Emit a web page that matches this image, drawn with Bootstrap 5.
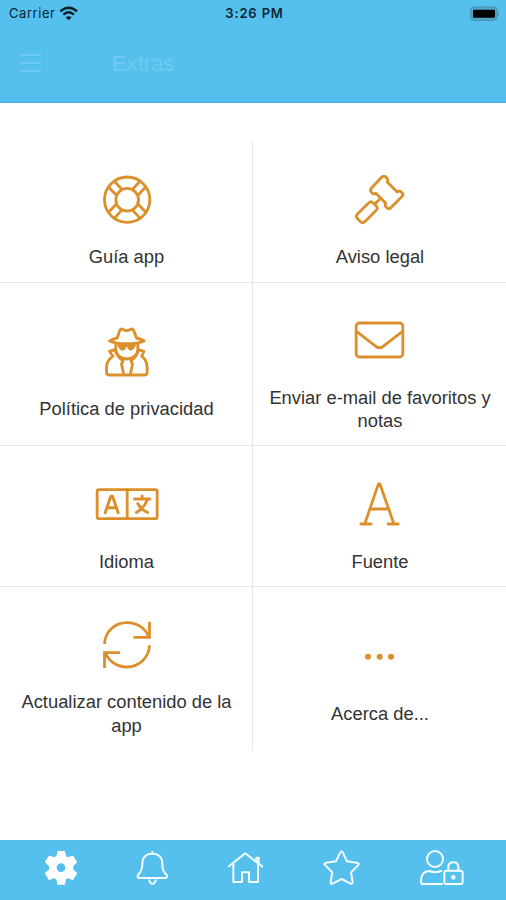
<!DOCTYPE html>
<html lang="es">
<head>
<meta charset="utf-8">
<meta name="viewport" content="width=device-width, initial-scale=1">
<title>Extras</title>
<link href="https://cdn.jsdelivr.net/npm/bootstrap@5.3.0/dist/css/bootstrap.min.css" rel="stylesheet">
<style>
body{font-family:"Liberation Sans",Arial,sans-serif;height:900px;overflow:hidden;color:#333}
.sky{background:#55c0ee}
.top-area{height:103px;border-bottom:2px solid #43b8e9}
.status{height:27px;font-family:Inter,sans-serif;color:#0b2634;line-height:27px;padding:0 6px 0 9px}
.carrier{font-size:13px;letter-spacing:.55px}
.clock{font-size:13px;font-weight:600;letter-spacing:.85px}
.battery{margin-right:-1px}
.title-bar{height:72px;padding-left:20px;color:#70c9f1}
.screen-title{font-size:22px;margin-left:71px}
.tiles{margin-top:39px}
.tile{padding:33px 11px 13px 12px;font-size:18.35px;line-height:23.5px;border-bottom:1px solid #e6e6e6}
.tile:nth-child(odd){border-right:1px solid #e6e6e6}
.tile:nth-child(3),.tile:nth-child(4){padding-bottom:12px}
.tile:nth-last-child(-n+2){border-bottom:0}
.tile svg{width:70px;height:50px;margin-bottom:20px;flex:none;fill:none;stroke:#dc902d;stroke-width:8.5;stroke-linecap:round;stroke-linejoin:round}
.tile:nth-child(5) svg,.tile:nth-child(6) svg{margin-bottom:21px}
.tabs{height:60px;padding:0 42px 0 44.7px}
.tabs a{line-height:0}
.tabs svg{height:60px;overflow:visible;fill:none;stroke:#f5fcff;stroke-width:6;stroke-linecap:round;stroke-linejoin:round}
</style>
</head>
<body class="d-flex flex-column bg-white">
<header class="sky top-area">
  <div class="status row g-0">
    <div class="col d-flex align-items-center"><span class="carrier">Carrier</span>
      <svg class="ms-1" width="20" height="15" viewBox="183 14 60 45" fill="none" stroke="#071c27" stroke-width="7"><path d="M187 30Q212 8 237 30M196 40Q212 26 228 40"/><path d="M203 48Q212 41 221 48L212 57Z" fill="#071c27" stroke="none"/></svg>
    </div>
    <div class="col-auto clock">3:26 PM</div>
    <div class="col d-flex align-items-center justify-content-end">
      <svg class="battery" width="32" height="16" viewBox="648 16 96 48"><rect x="653" y="19" width="79" height="40" rx="10" fill="#54a6c8" stroke="#438fae" stroke-width="3"/><path d="M735 31q6 8 0 16z" fill="#438fae"/><rect x="660" y="27" width="66" height="24" rx="3" fill="#000"/></svg>
    </div>
  </div>
  <div class="title-bar d-flex align-items-center">
    <svg width="21" height="20" viewBox="0 0 21 20" stroke="currentColor" stroke-width="1.8"><path d="M0 2H21M0 10H21M0 18H21"/></svg>
    <div class="screen-title">Extras</div>
  </div>
</header>
<main class="flex-grow-1">
  <div class="tiles row row-cols-2 g-0 text-center">
    <div class="tile col d-flex flex-column align-items-center justify-content-center">
      <svg viewBox="34.5 45 210 150"><circle cx="140" cy="119" r="68"/><circle cx="140" cy="119" r="34"/><path d="M101 63L123 87M84 81L107 105M179 63L157 87M196 81L173 105M84 157L107 133M101 175L123 151M196 157L173 133M179 175L157 151"/></svg>
      <div>Guía app</div>
    </div>
    <div class="tile col d-flex flex-column align-items-center justify-content-center">
      <svg viewBox="46.5 45 210 150"><path d="M157 51Q163 46 169 51L173 56Q177 61 173 66L203 96Q207 92 213 94L218 99Q223 104 218 109L183 144Q178 149 173 144L168 139Q165 135 169 130L139 100Q134 104 129 100L125 96Q120 91 126 84ZM154 114L135 133M118 128Q124 122 130 128L141 139Q146 145 140 151L106 185Q99 191 93 185L83 175Q78 169 83 163Z"/></svg>
      <div>Aviso legal</div>
    </div>
    <div class="tile col d-flex flex-column align-items-center justify-content-center">
      <svg viewBox="34.5 51 210 150"><path d="M110 84L118 61Q121 55 127 58Q138 66 150 58Q156 55 160 62L168 84Q181 87 191 93Q174 101 139 101Q105 101 87 93Q97 87 110 84ZM106 103V118Q108 144 139 147Q170 144 172 118V103M103 119L87 124L97 139Q78 151 78 174V187Q78 195 86 195H193Q200 195 200 187V174Q200 151 184 139L190 124L174 119M104 123Q113 144 128 152L123 162L129 191M173 123Q166 144 151 152L156 162L150 191M116 107H162"/><path d="M114 107H136L135 116Q125 126 117 116ZM141 107H163L160 116Q150 126 143 116Z" fill="#dc902d" stroke-width="2"/></svg>
      <div>Política de privacidad</div>
    </div>
    <div class="tile col d-flex flex-column align-items-center justify-content-center">
      <svg viewBox="46.5 33 210 150"><rect x="80" y="54" width="140" height="102" rx="10"/><path d="M82 80L139 124Q150 133 161 124L218 80"/></svg>
      <div>Enviar e-mail de favoritos y notas</div>
    </div>
    <div class="tile col d-flex flex-column align-items-center justify-content-center">
      <svg viewBox="34.5 27 210 150"><rect x="50" y="59" width="180" height="87" rx="5"/><path d="M140 59V146"/><path stroke-width="9" d="M74 128L91 79H96L113 128M81 113H106M162 87H208M185 78V87M200 89Q193 114 168 127M172 101Q182 119 201 127"/></svg>
      <div>Idioma</div>
    </div>
    <div class="tile col d-flex flex-column align-items-center justify-content-center">
      <svg viewBox="46.5 27 210 150"><path d="M106 161L146 44Q149 38 152 44L193 161M121 117H178M94 162H125M176 162H206"/></svg>
      <div>Fuente</div>
    </div>
    <div class="tile col d-flex flex-column align-items-center justify-content-center">
      <svg viewBox="34.5 30 210 150"><path stroke-linecap="butt" stroke-linejoin="miter" d="M72 102C73 65 103 38 139 38C169 38 195 54 204 80M207 35V82H159M207 106C206 143 175 171 139 171C110 171 84 153 75 129M72 174V128H119"/></svg>
      <div>Actualizar contenido de la app</div>
    </div>
    <div class="tile col d-flex flex-column align-items-center justify-content-center">
      <svg viewBox="76 -24 210 150"><g fill="#dc902d" stroke="none"><circle cx="145" cy="50" r="9"/><circle cx="180" cy="50" r="9"/><circle cx="214" cy="50" r="9"/></g></svg>
      <div>Acerca de...</div>
    </div>
  </div>
</main>
<nav class="sky tabs d-flex justify-content-between" aria-label="Principal">
  <a href="#" aria-label="Extras"><svg width="32" viewBox="134 30 96 180"><path fill="#fff" fill-rule="evenodd" stroke="#fff" stroke-width="4" d="M173 65H192L195 79L203 84L217 79L228 96L217 107V119L228 130L217 148L203 142L195 147L192 162H173L170 147L161 142L147 148L136 130L148 119V107L136 96L147 79L161 84L170 79ZM182 98A15 15 0 1 0 182 128A15 15 0 1 0 182 98Z"/></svg></a>
  <a href="#" aria-label="Avisos"><svg width="31" viewBox="409 30 93 180"><path d="M455 65V70M455 71C436 71 425 83 425 101C425 121 419 127 412 135Q408 143 416 144H494Q502 143 498 135C490 127 485 121 485 101C485 83 474 71 455 71ZM446 151Q448 161 455 161Q463 161 465 151"/></svg></a>
  <a href="#" aria-label="Inicio"><svg width="35" viewBox="681 30 105 180"><path d="M684 109L733 70L783 109M697 101V156H723V127H744V156H771V101M766 92V83H773V99"/></svg></a>
  <a href="#" aria-label="Favoritos"><svg width="37" viewBox="212 30 111 180"><path d="M263 69Q268 60 272 69L284 94L313 98Q323 100 317 106L296 127L301 156Q301 164 293 160L268 147L242 160Q234 164 235 156L240 127L219 106Q212 100 222 98L251 94Z"/></svg></a>
  <a href="#" aria-label="Cuenta"><svg width="44" viewBox="501 30 132 180"><circle cx="546" cy="87" r="24"/><path d="M567 162H510Q504 162 504 155Q504 124 529 123Q546 130 565 123M586 121V111Q586 97 601 97Q616 97 616 111V121"/><rect x="574" y="122" width="55" height="40" rx="7"/><circle cx="601" cy="142" r="4" fill="#fff"/></svg></a>
</nav>
<script src="https://cdn.jsdelivr.net/npm/bootstrap@5.3.0/dist/js/bootstrap.bundle.min.js"></script>
</body>
</html>
